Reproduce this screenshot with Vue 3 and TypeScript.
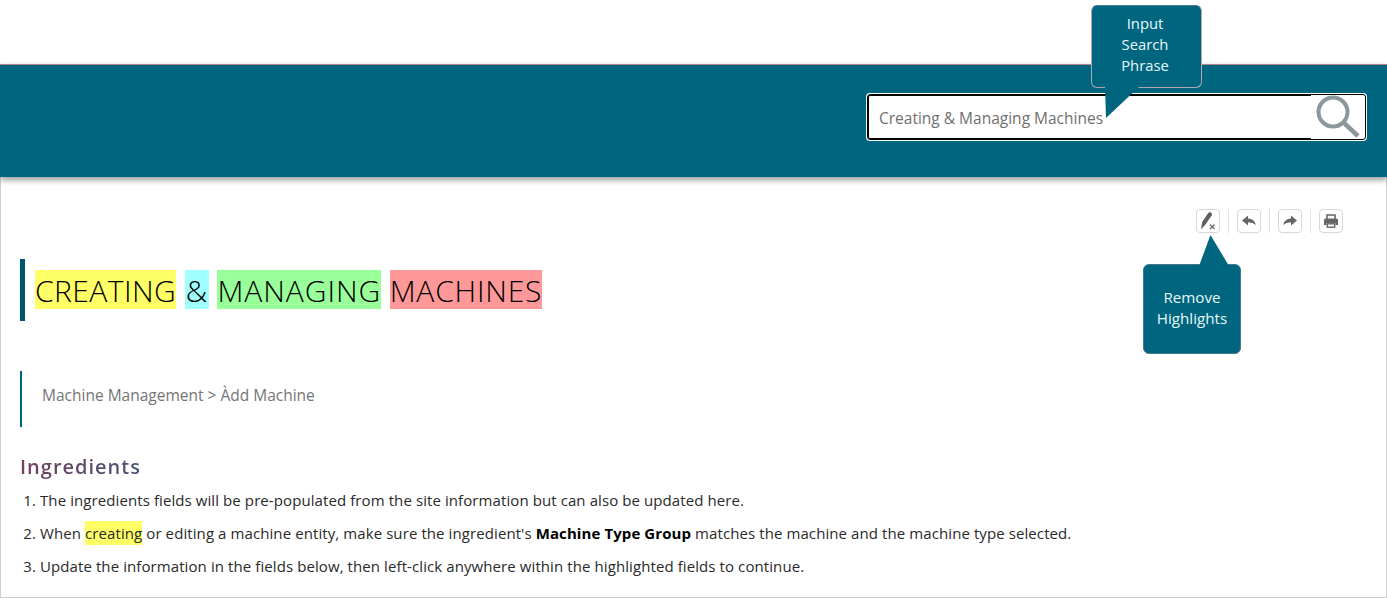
<script setup lang="ts">
const title = [
  { text: 'CREATING', color: '#ffff66', spacing: '0.45px', padding: '0' },
  { text: '&', color: '#a0ffff', spacing: '0.7px', padding: '0 1px' },
  { text: 'MANAGING', color: '#99ff99', spacing: '0.95px', padding: '0' },
  { text: 'MACHINES', color: '#ff9999', spacing: '0.8px', padding: '0' },
]
</script>

<template>
  <div class="page">
    <header class="banner">
      <div class="search">
        <span class="query">Creating &amp; Managing Machines</span>
        <svg class="lens" width="50" height="46" viewBox="0 0 50 46" fill="none" stroke="#8b979d">
          <circle cx="20" cy="18" r="14.5" stroke-width="4" />
          <path d="M30.5 28.5 L45 42" stroke-width="4.5" />
        </svg>
      </div>
    </header>

    <main class="content">
      <div class="toolbar">
        <button class="tool" type="button" aria-label="Remove highlights">
          <svg width="20" height="20" viewBox="0 0 20 20">
            <path d="M3 18.5 L4.2 11 L10.2 2 Q11.3 .8 13 1.6 Q14.6 2.6 13.8 4.2 L7.8 13 Z" fill="#5f5f5f" />
            <path d="M12 13.5 L16.5 18 M16.5 13.5 L12 18" stroke="#666" stroke-width="1.1" />
          </svg>
        </button>
        <span class="sep"></span>
        <button class="tool" type="button" aria-label="Undo">
          <svg width="16" height="16" viewBox="0 0 16 16">
            <path d="M1 7.5 L7 2.5 V5.4 Q13.4 5.6 15 12 Q11.8 9.2 7 9.2 V12.4 Z" fill="#666" />
          </svg>
        </button>
        <span class="sep"></span>
        <button class="tool" type="button" aria-label="Redo">
          <svg width="16" height="16" viewBox="0 0 16 16">
            <path d="M15 7.5 L9 2.5 V5.4 Q2.6 5.6 1 12 Q4.2 9.2 9 9.2 V12.4 Z" fill="#666" />
          </svg>
        </button>
        <span class="sep"></span>
        <button class="tool" type="button" aria-label="Print">
          <svg width="16" height="16" viewBox="0 0 16 16">
            <path d="M4 6 V2 H12 V6" fill="none" stroke="#666" stroke-width="1.6" />
            <path d="M2.5 5.5 H13.5 Q15 5.5 15 7 V12 H12.5 V10 H3.5 V12 H1 V7 Q1 5.5 2.5 5.5 Z" fill="#666" />
            <rect x="4.3" y="10.8" width="7.4" height="3.4" fill="#fff" stroke="#666" stroke-width="1.4" />
          </svg>
        </button>
      </div>

      <h1 class="title">
        <mark
          v-for="word in title"
          :key="word.text"
          class="word"
          :style="{ background: word.color, letterSpacing: word.spacing, padding: word.padding }"
        >{{ word.text }}</mark>
      </h1>

      <p class="crumb">Machine Management &gt; Àdd Machine</p>

      <h2 class="section">Ingredients</h2>
      <ol class="steps">
        <li>The ingredients fields will be pre-populated from the site information but can also be updated here.</li>
        <li>When <mark class="hit">creating</mark> or editing a machine entity, make sure the ingredient's <b>Machine Type Group</b> matches the machine and the machine type selected.</li>
        <li>Update the information in the fields below, then left-click anywhere within the highlighted fields to continue.</li>
      </ol>
    </main>

    <aside class="tip tip-search">
      Input<br />Search<br />Phrase
      <svg class="tail tail-search" width="36" height="33" viewBox="0 0 36 33">
        <path d="M0 0 L1 32 L35 0 Z" fill="#00667f" />
      </svg>
    </aside>
    <aside class="tip tip-remove">
      Remove<br />Highlights
      <svg class="tail tail-remove" width="31" height="31" viewBox="0 0 31 31">
        <path d="M0 31 L11.5 0 L30 31 Z" fill="#00667f" />
      </svg>
    </aside>
  </div>
</template>

<style>
html,
body {
  margin: 0;
  background: #fff;
}
</style>

<style scoped>
.page {
  position: relative;
  width: 1387px;
  height: 598px;
  padding-top: 64px;
  box-sizing: border-box;
  overflow: hidden;
  font-family: "Open Sans", "Noto Sans", sans-serif;
  color: #222;
  background: #fff;
}
.banner {
  position: relative;
  z-index: 1;
  display: flex;
  justify-content: flex-end;
  align-items: flex-start;
  box-sizing: border-box;
  height: 113px;
  padding: 29px 21px 0 0;
  background: #00667f;
  border-top: 1px solid #b9838f;
  box-shadow: 0 3px 6px rgba(0, 0, 0, 0.4);
}
.search {
  position: relative;
  display: flex;
  box-sizing: border-box;
  width: 499px;
  height: 46px;
  background: #fff;
  border: 1px solid #000;
  border-radius: 3px;
  box-shadow: 0 0 0 1px #fff;
}
.query {
  display: flex;
  align-items: center;
  box-sizing: border-box;
  width: 443px;
  padding: 1px 0 0 10px;
  border: 1px solid #000;
  border-right: 0;
  border-radius: 2px 0 0 2px;
  font-size: 15.5px;
  color: #6f6f6f;
}
.lens {
  position: absolute;
  right: 2px;
  top: -1px;
}
.content {
  box-sizing: border-box;
  height: 421px;
  padding: 32px 19px 0;
  border: 1px solid #cfcfcf;
  border-top: 0;
}
.toolbar {
  display: flex;
  justify-content: flex-end;
  align-items: stretch;
  gap: 8px;
  padding-right: 24px;
}
.tool {
  display: flex;
  align-items: center;
  justify-content: center;
  width: 24px;
  height: 24px;
  padding: 0;
  background: #fff;
  border: 1px solid #d8d8d8;
  border-radius: 4px;
}
.sep {
  width: 1px;
  background: #e2e2e2;
}
.title {
  display: flex;
  gap: 8.5px;
  align-items: flex-start;
  box-sizing: border-box;
  height: 62px;
  margin: 26px 0 0;
  padding: 11px 0 0 10px;
  border-left: 5px solid #00566e;
  font-size: 30px;
  font-weight: 300;
}
.word {
  height: 39px;
  color: #000;
  line-height: 41px;
}
.crumb {
  box-sizing: border-box;
  height: 56px;
  margin: 50px 0 0 0;
  padding-left: 20px;
  border-left: 2px solid #00667f;
  font-size: 15.5px;
  line-height: 48px;
  color: #757575;
}
.section {
  width: max-content;
  margin: 25px 0 0;
  font-size: 20px;
  font-weight: 600;
  line-height: 30px;
  letter-spacing: 1px;
  background: linear-gradient(90deg, #74405c, #4a5476);
  -webkit-background-clip: text;
  background-clip: text;
  color: transparent;
}
.steps {
  margin: 2px 0 0;
  padding: 0 0 0 20px;
  font-size: 15px;
  letter-spacing: 0.09px;
  line-height: 33px;
  color: #2a2a2a;
}
.hit {
  background: #ffff66;
  color: inherit;
  padding: 2px 0;
}
.steps b {
  color: #000;
}
.tip {
  position: absolute;
  z-index: 2;
  box-sizing: border-box;
  background: #00667f;
  border-radius: 6px;
  color: #e8f7fa;
  font-size: 15.2px;
  line-height: 21px;
  text-align: center;
}
.tip-search {
  left: 1091px;
  top: 5px;
  width: 111px;
  height: 83px;
  padding: 7px 3px 0 0;
  border: 1px solid #b3a6b4;
  border-top-color: #4a7f90;
  font-size: 14.8px;
}
.tip-remove {
  left: 1143px;
  top: 264px;
  width: 98px;
  height: 90px;
  padding-top: 22px;
  border: 1px solid #47788b;
}
.tail {
  position: absolute;
  display: block;
}
.tail-search {
  left: 13px;
  top: 80px;
}
.tail-remove {
  left: 55px;
  top: -30px;
}
</style>
